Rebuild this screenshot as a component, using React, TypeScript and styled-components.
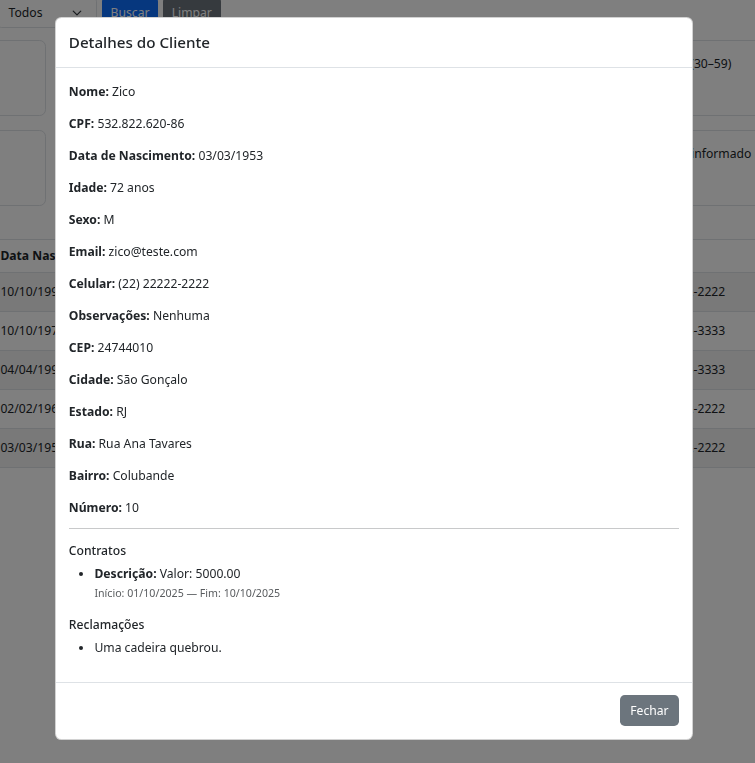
import React from "react";
import styled, { createGlobalStyle } from "styled-components";

const GlobalStyle = createGlobalStyle`
  html, body {
    margin: 0;
    padding: 0;
  }
  body {
    font-family: "Noto Sans", "Liberation Sans", sans-serif;
    font-size: 12.16px;
    line-height: 19.2px;
    color: #212529;
    background: #ffffff;
    overflow: hidden;
  }
  * {
    box-sizing: border-box;
  }
`;

/* ---------- page behind the modal ---------- */

const Page = styled.div`
  width: 755px;
  height: 763px;
  overflow: hidden;
`;

const Content = styled.div`
  width: 1200px;
  margin: -3px 0 0 -210px;
  display: flex;
  flex-direction: column;
`;

const Toolbar = styled.div`
  display: flex;
  align-items: center;
  gap: 5px;
  padding-left: 14px;
  margin-bottom: 12px;
`;

const SearchInput = styled.div`
  width: 180px;
  height: 31px;
  margin-right: 8px;
  border: 1px solid #dee2e6;
  border-radius: 4.8px;
`;

const Select = styled.div`
  width: 100px;
  height: 31px;
  display: flex;
  align-items: center;
  justify-content: space-between;
  padding: 0 14px 0 10.6px;
  border: 1px solid #dee2e6;
  border-radius: 4.8px;
`;

const Button = styled.button<{ $variant: "primary" | "secondary" | "danger" | "info" }>`
  font-family: inherit;
  font-size: 12.16px;
  line-height: 19.2px;
  padding: 4.8px 9.6px;
  border: 1px solid transparent;
  border-radius: 4.8px;
  color: #fff;
  background: ${(p) =>
    p.$variant === "primary"
      ? "#0d6efd"
      : p.$variant === "danger"
      ? "#dc3545"
      : p.$variant === "info"
      ? "#0dcaf0"
      : "#6c757d"};
`;

const ToolbarButton = styled(Button)`
  padding: 4.8px 7.6px;
`;

const SmallButton = styled(Button)`
  font-size: 10.64px;
  line-height: 16.8px;
  padding: 3.2px 6.4px;
  margin-right: 4px;
`;

const CardGrid = styled.div`
  display: grid;
  grid-template-columns: repeat(4, 256px);
  gap: 14px;
`;

const StatCard = styled.div`
  height: 76px;
  padding: 12.8px;
  border: 1px solid #dee2e6;
  border-radius: 6.4px;
`;

const StatValue = styled.div`
  font-size: 19px;
  font-weight: 500;
  line-height: 26px;
`;

const Table = styled.table`
  margin-top: 33px;
  border-collapse: collapse;
  table-layout: fixed;
  width: 1200px;
`;

const Th = styled.th<{ $w: number }>`
  width: ${(p) => p.$w}px;
  height: 32px;
  text-align: left;
  font-weight: 700;
  padding: 6.4px;
  white-space: nowrap;
  overflow: hidden;
  border-top: 1px solid #dee2e6;
  border-bottom: 1px solid #dee2e6;
`;

const Tr = styled.tr<{ $odd: boolean }>`
  background: ${(p) => (p.$odd ? "#f2f2f2" : "#ffffff")};
`;

const Td = styled.td`
  height: 39px;
  padding: 6.4px;
  white-space: nowrap;
  overflow: hidden;
  border-bottom: 1px solid #dee2e6;
`;

/* ---------- modal ---------- */

const Backdrop = styled.div`
  position: fixed;
  inset: 0;
  background: rgba(0, 0, 0, 0.5);
  padding: 17px 0 0 55px;
`;

const Dialog = styled.div`
  width: 638px;
  background: #fff;
  border: 1px solid rgba(0, 0, 0, 0.175);
  border-radius: 6.4px;
  display: flex;
  flex-direction: column;
`;

const Header = styled.div`
  padding: 12.3px 12.8px;
  border-bottom: 1px solid #dee2e6;
`;

const Title = styled.h5`
  margin: 0;
  font-size: 15.2px;
  font-weight: 500;
  line-height: 24px;
`;

const Body = styled.div`
  padding: 12.8px 12.8px 11.8px;
`;

const Field = styled.p`
  margin: 0 0 11.3px;
  padding-top: 1.5px;
`;

const Divider = styled.hr`
  margin: 11.3px 0 12.8px;
  border: 0;
  border-top: 1px solid #c8c9ca;
`;

const SectionTitle = styled.h6`
  margin: 0 0 5.4px;
  padding-top: 1px;
  font-size: 12.16px;
  font-weight: 500;
  line-height: 15.36px;
`;

const List = styled.ul`
  margin: 0 0 12.8px;
  padding-left: 25.6px;
`;

const Muted = styled.small`
  font-size: 10.64px;
  color: #595c5f;
`;

const Footer = styled.div`
  display: flex;
  justify-content: flex-end;
  padding: 9.6px;
  border-top: 1px solid #dee2e6;
`;

const FooterButton = styled(Button)`
  margin: 3.2px;
`;

const Chevron = () => (
  <svg width="10" height="10" viewBox="0 0 16 16" fill="none">
    <path d="M2 5l6 6 6-6" stroke="#343a40" strokeWidth="2" strokeLinecap="round" strokeLinejoin="round" />
  </svg>
);

const fields: [string, string][] = [
  ["Nome", "Zico"],
  ["CPF", "532.822.620-86"],
  ["Data de Nascimento", "03/03/1953"],
  ["Idade", "72 anos"],
  ["Sexo", "M"],
  ["Email", "zico@teste.com"],
  ["Celular", "(22) 22222-2222"],
  ["Observações", "Nenhuma"],
  ["CEP", "24744010"],
  ["Cidade", "São Gonçalo"],
  ["Estado", "RJ"],
  ["Rua", "Rua Ana Tavares"],
  ["Bairro", "Colubande"],
  ["Número", "10"],
];

const clients = [
  { nome: "Ana Souza", cpf: "111.111.111-11", nasc: "10/10/1995", email: "ana@teste.com", cidade: "Niterói", cel: "(21) 22222-2222" },
  { nome: "Bruno Lima", cpf: "222.222.222-22", nasc: "10/10/1975", email: "bruno@teste.com", cidade: "Rio de Janeiro", cel: "(21) 33333-3333" },
  { nome: "Carla Dias", cpf: "333.333.333-33", nasc: "04/04/1990", email: "carla@teste.com", cidade: "Maricá", cel: "(21) 33333-3333" },
  { nome: "Diego Alves", cpf: "444.444.444-44", nasc: "02/02/1965", email: "diego@teste.com", cidade: "Itaboraí", cel: "(22) 22222-2222" },
  { nome: "Zico", cpf: "532.822.620-86", nasc: "03/03/1953", email: "zico@teste.com", cidade: "São Gonçalo", cel: "(22) 22222-2222" },
];

export default function App() {
  return (
    <>
      <GlobalStyle />
      <Page>
        <Content>
          <Toolbar>
            <SearchInput />
            <Select>
              <span>Todos</span>
              <Chevron />
            </Select>
            <ToolbarButton $variant="primary">Buscar</ToolbarButton>
            <ToolbarButton $variant="secondary">Limpar</ToolbarButton>
          </Toolbar>
          <CardGrid>
            <StatCard>
              Total de clientes
              <StatValue>5</StatValue>
            </StatCard>
            <StatCard>
              Jovens (até 29)
              <StatValue>2</StatValue>
            </StatCard>
            <StatCard>
              Sexo masculino
              <StatValue>3</StatValue>
            </StatCard>
            <StatCard>
              Total adultos (30–59)
              <StatValue>2</StatValue>
            </StatCard>
            <StatCard>
              Contratos ativos
              <StatValue>1</StatValue>
            </StatCard>
            <StatCard>
              Com reclamações
              <StatValue>1</StatValue>
            </StatCard>
            <StatCard>
              Sexo feminino
              <StatValue>2</StatValue>
            </StatCard>
            <StatCard>
              Gênero - não informado
              <StatValue>0</StatValue>
            </StatCard>
          </CardGrid>
          <Table>
            <thead>
              <tr>
                <Th $w={106}>Nome</Th>
                <Th $w={98}>CPF</Th>
                <Th $w={120}>Data Nascimento</Th>
                <Th $w={200}>Email</Th>
                <Th $w={314}>Cidade</Th>
                <Th $w={150}>Celular</Th>
                <Th $w={212}>Ações</Th>
              </tr>
            </thead>
            <tbody>
              {clients.map((c, i) => (
                <Tr key={c.cpf} $odd={i % 2 === 0}>
                  <Td>{c.nome}</Td>
                  <Td>{c.cpf}</Td>
                  <Td>{c.nasc}</Td>
                  <Td>{c.email}</Td>
                  <Td>{c.cidade}</Td>
                  <Td>{c.cel}</Td>
                  <Td>
                    <SmallButton $variant="info">Ver</SmallButton>
                    <SmallButton $variant="primary">Editar</SmallButton>
                    <SmallButton $variant="danger">Excluir</SmallButton>
                  </Td>
                </Tr>
              ))}
            </tbody>
          </Table>
        </Content>
      </Page>

      <Backdrop>
        <Dialog>
          <Header>
            <Title>Detalhes do Cliente</Title>
          </Header>
          <Body>
            {fields.map(([label, value]) => (
              <Field key={label}>
                <strong>{label}:</strong> {value}
              </Field>
            ))}
            <Divider />
            <SectionTitle>Contratos</SectionTitle>
            <List>
              <li>
                <strong>Descrição:</strong> Valor: 5000.00
                <br />
                <Muted>Início: 01/10/2025 — Fim: 10/10/2025</Muted>
              </li>
            </List>
            <SectionTitle>Reclamações</SectionTitle>
            <List>
              <li>Uma cadeira quebrou.</li>
            </List>
          </Body>
          <Footer>
            <FooterButton $variant="secondary">Fechar</FooterButton>
          </Footer>
        </Dialog>
      </Backdrop>
    </>
  );
}
